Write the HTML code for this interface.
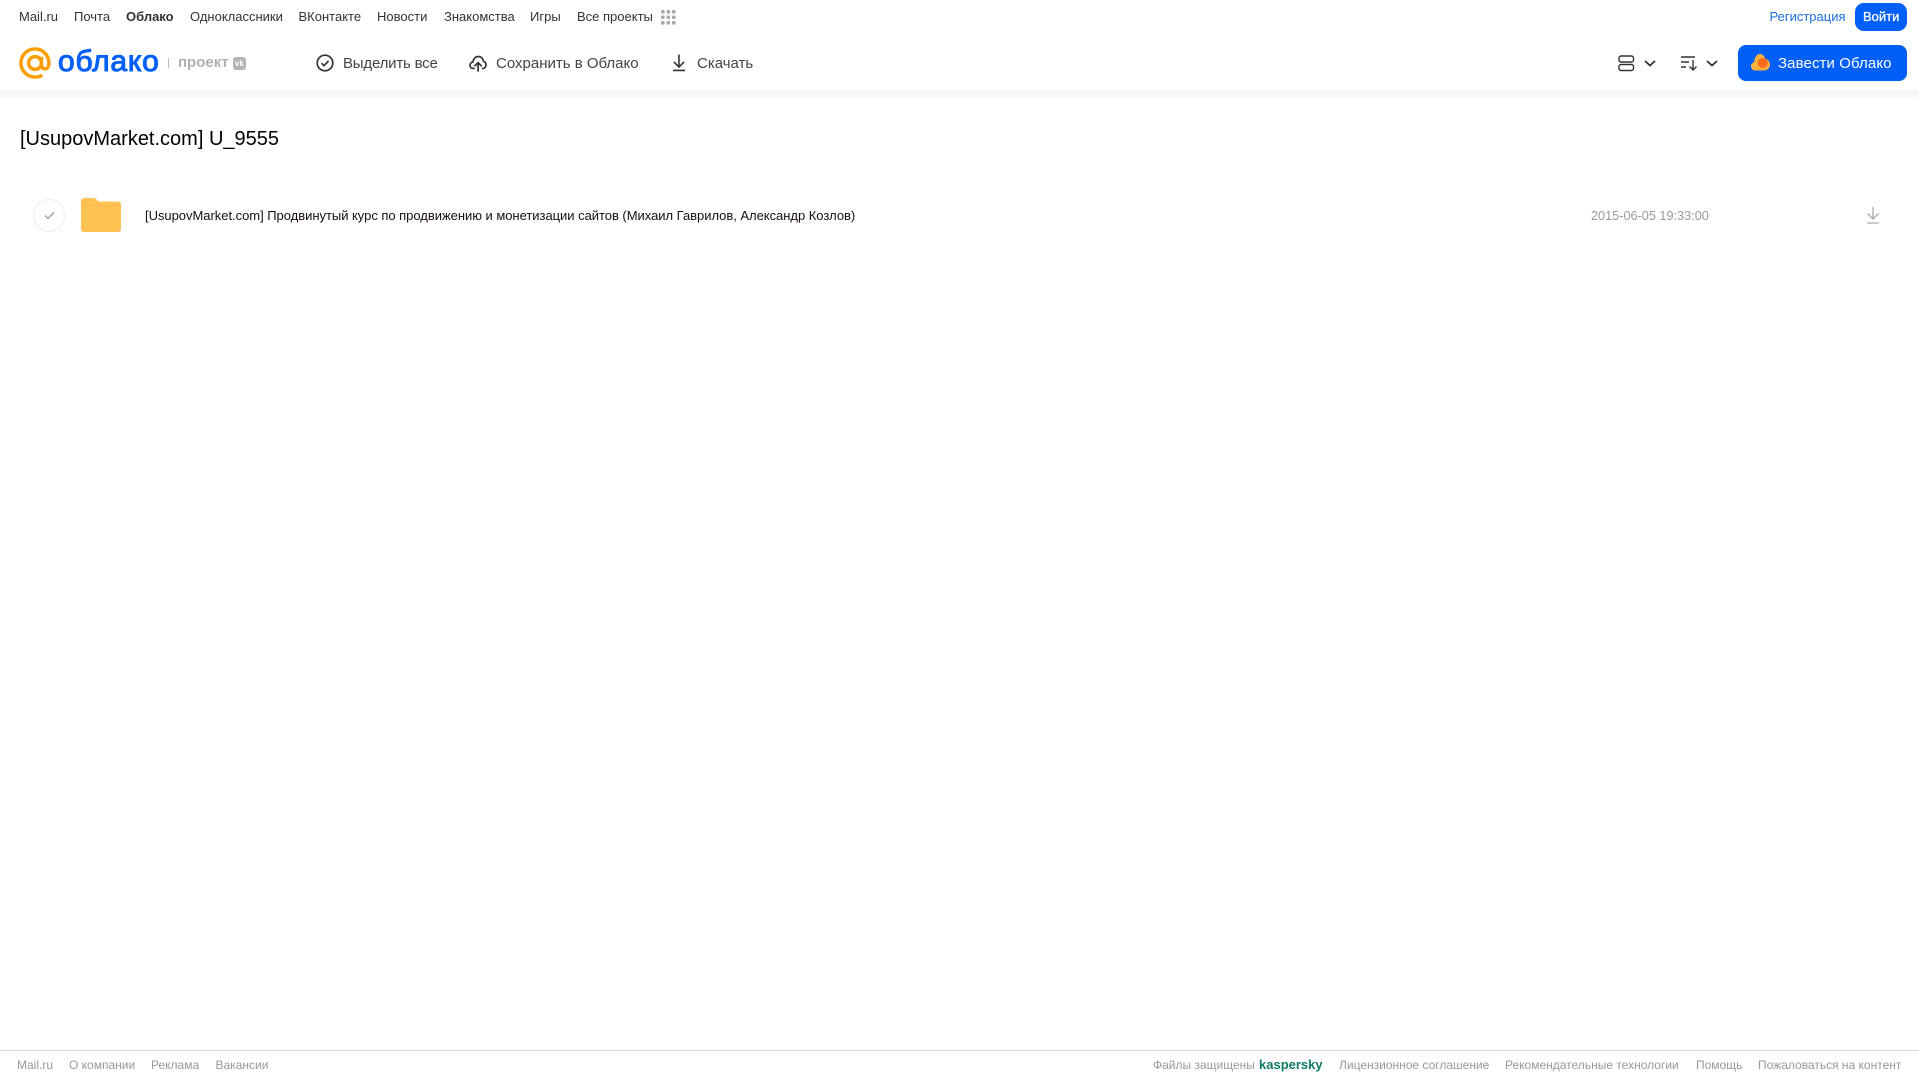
<!DOCTYPE html>
<html lang="ru"><head><meta charset="utf-8"><title>Облако</title>
<style>
html,body{margin:0;padding:0;width:1919px;height:1079px;overflow:hidden;background:#fff;font-family:"Liberation Sans",sans-serif}
.t{position:absolute;white-space:nowrap;line-height:20px;height:20px}
.n{top:7px;font-size:13px;color:#333}
.a{top:54px;font-size:15px;color:#444}
.f{top:1055px;font-size:12px;color:#999}
svg{position:absolute;overflow:visible}
#shadow{position:absolute;left:0;top:91px;width:1919px;height:10px;background:linear-gradient(#f4f4f4,#fff)}
</style></head><body>
<div id="shadow"></div>
<span class="t n" style="left:19px">Mail.ru</span>
<span class="t n" style="left:74px">Почта</span>
<span class="t n" style="left:126px;font-weight:bold">Облако</span>
<span class="t n" style="left:190px">Одноклассники</span>
<span class="t n" style="left:298.500px">ВКонтакте</span>
<span class="t n" style="left:377px">Новости</span>
<span class="t n" style="left:444px">Знакомства</span>
<span class="t n" style="left:530px">Игры</span>
<span class="t n" style="left:577px">Все проекты</span>
<svg style="left:661px;top:10px" width="15" height="15" fill="#aaa"><rect x="0" y="0" width="3.6" height="3.6" rx="1"/><rect x="5.5" y="0" width="3.6" height="3.6" rx="1"/><rect x="11" y="0" width="3.6" height="3.6" rx="1"/><rect x="0" y="5.5" width="3.6" height="3.6" rx="1"/><rect x="5.5" y="5.5" width="3.6" height="3.6" rx="1"/><rect x="11" y="5.5" width="3.6" height="3.6" rx="1"/><rect x="0" y="11" width="3.6" height="3.6" rx="1"/><rect x="5.5" y="11" width="3.6" height="3.6" rx="1"/><rect x="11" y="11" width="3.6" height="3.6" rx="1"/></svg>
<span class="t n" style="left:1769.500px;color:#1a6fe0">Регистрация</span>
<div style="position:absolute;left:1855px;top:3px;width:52px;height:28px;border-radius:9px;background:#005ff9"></div>
<span class="t n" style="left:1863px;color:#fff;-webkit-text-stroke:.3px #fff">Войти</span>

<svg style="left:19px;top:47px" width="32" height="32" viewBox="0 0 33 33" fill="none" stroke="#ff9e00" stroke-width="3.6"><circle cx="16.5" cy="16.5" r="6.6"/><path d="M23.1 10v8.5c0 5.5 7.8 5.500 7.800-1.500C30.900 8.500 24.500 2 16.500 2S2 8.500 2 16.500 8.500 31 16.500 31c3 0 5.500-.8 7.500-2"/></svg>
<span class="t" style="left:58px;top:46px;height:32px;line-height:32px;font-size:30px;letter-spacing:.8px;color:#005ff9;-webkit-text-stroke:1px #005ff9">облако</span>
<div style="position:absolute;left:168px;top:58px;width:1px;height:10px;background:#bbb"></div>
<span class="t" style="left:178px;top:53px;font-size:15px;font-weight:bold;color:#b0b0b0">проект</span>
<div style="position:absolute;left:233px;top:57px;width:13px;height:13px;border-radius:3px;background:#b4b4b4;color:#fff;font:bold 8px/13px 'Liberation Sans',sans-serif;text-align:center">vk</div>

<svg style="left:316px;top:54px" width="18" height="18" viewBox="0 0 18 18" fill="none" stroke="#333" stroke-width="1.700"><circle cx="9" cy="9" r="7.800"/><path d="M5.500 9.200l2.500 2.500 4.500-4.700"/></svg>
<span class="t a" style="left:343px;letter-spacing:-.2px">Выделить все</span>
<svg style="left:469px;top:54px" width="18" height="18" viewBox="0 0 18 18" fill="none" stroke="#333" stroke-width="1.700" stroke-linecap="round" stroke-linejoin="round"><path d="M5 14.500H4.500C2.300 14.500 1 13 1 11.200c0-1.700 1.200-3 2.900-3.200C4.300 4.800 6.500 2.500 9.300 2.500c2.700 0 4.800 2 5.100 4.700 1.600.4 2.600 1.900 2.600 3.600 0 2-1.400 3.700-3.500 3.700"/><path d="M9.100 17V9M5.900 11.800l3.200-3.200 3.200 3.200"/></svg>
<span class="t a" style="left:496px">Сохранить в Облако</span>
<svg style="left:672px;top:54px" width="14" height="18" viewBox="0 0 15 18" fill="none" stroke="#333" stroke-width="1.700"><path d="M7.500 0v13M2 7.800l5.500 5.500L13 7.800M1 17h13"/></svg>
<span class="t a" style="left:697px">Скачать</span>

<svg style="left:1618px;top:55px" width="16" height="16" viewBox="0 0 16 16" fill="none" stroke="#333" stroke-width="1.400"><rect x="1" y="1" width="14.500" height="6" rx="2"/><rect x="1" y="9.500" width="14.500" height="6" rx="2"/></svg>
<svg style="left:1644px;top:60px" width="12" height="7" fill="none" stroke="#333" stroke-width="1.800"><path d="M1 1l5 4.500L11 1"/></svg>
<svg style="left:1681px;top:55px" width="17" height="16" viewBox="0 0 17 16" fill="none" stroke="#333" stroke-width="1.400"><path d="M0 2h14M0 7h8M0 12h5M12 5v10M8.500 11.500l3.500 3.500 3.500-3.500"/></svg>
<svg style="left:1706px;top:60px" width="12" height="7" fill="none" stroke="#333" stroke-width="1.800"><path d="M1 1l5 4.500L11 1"/></svg>
<div style="position:absolute;left:1738px;top:45px;width:169px;height:36px;border-radius:8px;background:#005ff9"></div>
<svg style="left:1751px;top:54px" width="19" height="17" viewBox="0 0 19 17"><path d="M4.500 16.500C2 16.500 0 14.600 0 12.200c0-2 1.300-3.600 3.200-4.100C3.600 3.600 5.500 0 8.800 0c2.700 0 4.800 2 5.200 4.700 2.800.3 5 2.800 5 5.800 0 3.300-2.700 6-6 6z" fill="#ffb13d"/><circle cx="11.800" cy="9" r="5" fill="#ff6a1a"/></svg>
<span class="t a" style="left:1778px;color:#fff;letter-spacing:.1px">Завести Облако</span>

<span class="t" style="left:20px;top:127px;height:24px;line-height:24px;font-size:20px;color:#000">[UsupovMarket.com] U_9555</span>
<div style="position:absolute;left:33px;top:199px;border:1px solid #ececec;border-radius:50%;box-sizing:border-box;width:32px;height:33px"></div>
<svg style="left:43.500px;top:211px" width="11" height="9" fill="none" stroke="#999" stroke-width="1.300"><path d="M1 4.500l3 3 6-6"/></svg>
<svg style="left:81px;top:198px" width="40" height="34" viewBox="0 0 40 34"><path d="M0 3C0 1.300 1.300 0 3 0h9c2 0 3 .8 4 2l1.500 1.500H37c1.700 0 3 1.300 3 3V31c0 1.700-1.300 3-3 3H3c-1.700 0-3-1.300-3-3z" fill="#ffc353"/><rect y="7" width="40" height="1" fill="#f7b23e" opacity=".6"/></svg>
<span class="t" style="left:145px;top:206px;font-size:13px;letter-spacing:-.03px;color:#1a0a1a">[UsupovMarket.com] Продвинутый курс по продвижению и монетизации сайтов (Михаил Гаврилов, Александр Козлов)</span>
<span class="t" style="left:1591px;top:206px;font-size:12.700px;color:#999">2015-06-05 19:33:00</span>
<svg style="left:1866px;top:207px" width="14" height="17" viewBox="0 0 14 17" fill="none" stroke="#aaa" stroke-width="1.300"><path d="M7 0v12M1.500 6.500L7 12l5.500-5.500M1 16h12"/></svg>

<div style="position:absolute;left:0;top:1050px;width:1919px;height:1px;background:#d9d9d9"></div>
<span class="t f" style="left:17px">Mail.ru</span>
<span class="t f" style="left:69px">О компании</span>
<span class="t f" style="left:151px">Реклама</span>
<span class="t f" style="left:215.500px">Вакансии</span>
<span class="t f" style="left:1153px">Файлы защищены</span>
<span class="t f" style="left:1259px;font-size:13px;font-weight:bold;color:#0f7a68">kaspersky</span>
<span class="t f" style="left:1339px">Лицензионное соглашение</span>
<span class="t f" style="left:1505px">Рекомендательные технологии</span>
<span class="t f" style="left:1696px">Помощь</span>
<span class="t f" style="left:1758px">Пожаловаться на контент</span>
</body></html>
